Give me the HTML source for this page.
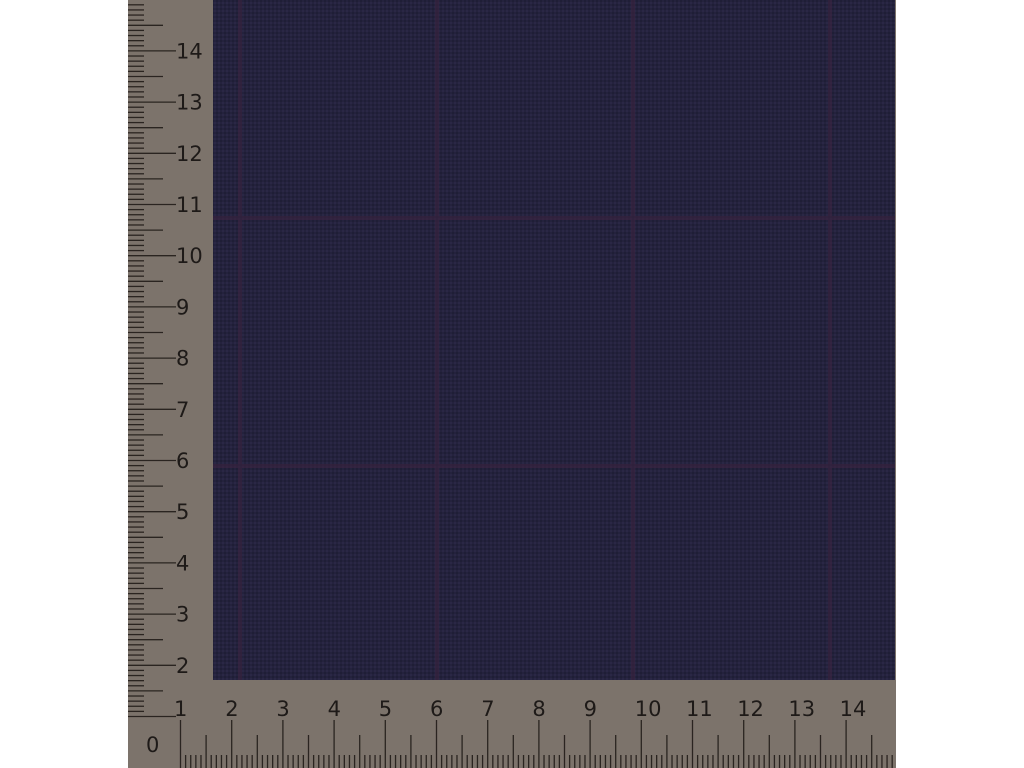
<!DOCTYPE html>
<html><head><meta charset="utf-8"><style>
html,body{margin:0;padding:0;background:#fff;width:1024px;height:768px;overflow:hidden}
svg{display:block}
text{font-family:"DejaVu Sans","Liberation Sans",sans-serif;font-size:21px;fill:#1e1a18}
</style></head><body>
<svg id="s" width="1024" height="768" xmlns="http://www.w3.org/2000/svg">
<defs>
<pattern id="wv" width="4" height="4" patternUnits="userSpaceOnUse">
<rect width="4" height="4" fill="#24223d"/>
<rect width="2" height="2" fill="#1f1e36"/>
<rect x="2" y="2" width="2" height="2" fill="#2a2745"/>
</pattern>
</defs>
<rect x="0" y="0" width="1024" height="768" fill="#fff"/>
<rect x="128" y="0" width="768" height="768" fill="#7c736b"/>
<rect x="213" y="0" width="682" height="680" fill="url(#wv)"/>
<g id="plaid" fill="#3b2340" opacity="0.6"></g>
<g id="tk" stroke="#2a2420" stroke-width="1.3"></g>
<g id="tx"></g>
</svg>
<script>
(function(){
var NS="http://www.w3.org/2000/svg";
function el(p,n,a,t){var e=document.createElementNS(NS,n);for(var k in a)e.setAttribute(k,a[k]);if(t)e.textContent=t;document.getElementById(p).appendChild(e);}
[240,437,633,830].forEach(function(x){el("plaid","rect",{x:x-2,y:0,width:4,height:680});});
[218,466].forEach(function(y){el("plaid","rect",{x:213,y:y-2,width:682,height:4});});
var s=51.2;
for(var m=0;m<=160;m++){
  var yy=716.5-m*s/10; if(yy<0)break;
  var L=(m%10==0)?48:(m%5==0)?35:16;
  el("tk","line",{x1:128,y1:yy,x2:128+L,y2:yy});
}
for(var n=2;n<=14;n++){var y2=716-(n-1)*s;el("tx","text",{x:176,y:y2+8},""+n);}
for(var k=0;k<=150;k++){
  var xx=180.5+k*s/10; if(xx>896)break;
  var t0;
  if(k%10==0)t0=720;else if(k%5==0)t0=735;else t0=755;
  el("tk","line",{x1:xx,y1:t0,x2:xx,y2:768});
}
for(var n2=1;n2<=14;n2++){var x2=180+(n2-1)*s;el("tx","text",{x:x2-6,y:716},""+n2);}
el("tx","text",{x:146,y:752},"0");
})();
</script>
</body></html>
